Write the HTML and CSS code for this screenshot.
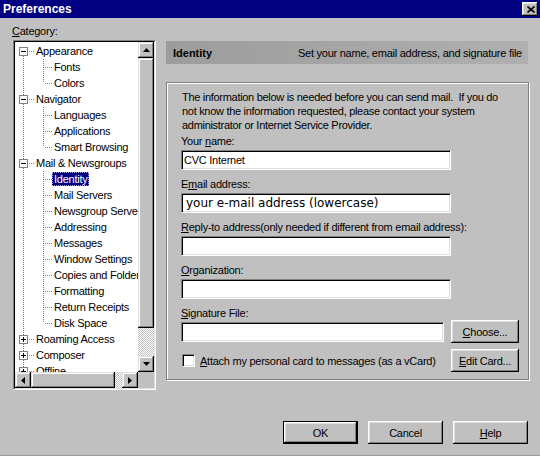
FILE: index.html
```html
<!DOCTYPE html>
<html>
<head>
<meta charset="utf-8">
<title>Preferences</title>
<link rel="stylesheet" href="styles.css">
</head>
<body>
<div class="window">
  <div class="titlebar">
    <span class="title">Preferences</span>
    <span class="close"><svg width="8" height="7" viewBox="0 0 8 7"><path d="M0.5 0.5L7.5 6.5M7.5 0.5L0.5 6.5" stroke="#000" stroke-width="1.6"/></svg></span>
  </div>

  <div class="main">
    <div class="left">
      <div class="cat-label"><u>C</u>ategory:</div>
      <div class="sunken">
        <div class="sunken-inner">
          <div class="tree-view">
            <ul class="tree">
              <li>
                <div class="row top"><span class="exp"><svg width="9" height="9"><rect x="0.5" y="0.5" width="8" height="8" fill="#fff" stroke="#808080"/><path d="M2 4.5h5" stroke="#000"/></svg></span><span class="hdots"></span><span class="lbl">Appearance</span></div>
                <ul class="children">
                  <li class="row child"><span class="hdots"></span><span class="lbl">Fonts</span></li>
                  <li class="row child"><span class="hdots"></span><span class="lbl">Colors</span></li>
                </ul>
              </li>
              <li>
                <div class="row top"><span class="exp"><svg width="9" height="9"><rect x="0.5" y="0.5" width="8" height="8" fill="#fff" stroke="#808080"/><path d="M2 4.5h5" stroke="#000"/></svg></span><span class="hdots"></span><span class="lbl">Navigator</span></div>
                <ul class="children">
                  <li class="row child"><span class="hdots"></span><span class="lbl">Languages</span></li>
                  <li class="row child"><span class="hdots"></span><span class="lbl">Applications</span></li>
                  <li class="row child"><span class="hdots"></span><span class="lbl">Smart Browsing</span></li>
                </ul>
              </li>
              <li>
                <div class="row top"><span class="exp"><svg width="9" height="9"><rect x="0.5" y="0.5" width="8" height="8" fill="#fff" stroke="#808080"/><path d="M2 4.5h5" stroke="#000"/></svg></span><span class="hdots"></span><span class="lbl">Mail &amp; Newsgroups</span></div>
                <ul class="children">
                  <li class="row child"><span class="hdots"></span><span class="lbl selected">Identity</span></li>
                  <li class="row child"><span class="hdots"></span><span class="lbl">Mail Servers</span></li>
                  <li class="row child"><span class="hdots"></span><span class="lbl">Newsgroup Servers</span></li>
                  <li class="row child"><span class="hdots"></span><span class="lbl">Addressing</span></li>
                  <li class="row child"><span class="hdots"></span><span class="lbl">Messages</span></li>
                  <li class="row child"><span class="hdots"></span><span class="lbl">Window Settings</span></li>
                  <li class="row child"><span class="hdots"></span><span class="lbl">Copies and Folders</span></li>
                  <li class="row child"><span class="hdots"></span><span class="lbl">Formatting</span></li>
                  <li class="row child"><span class="hdots"></span><span class="lbl">Return Receipts</span></li>
                  <li class="row child"><span class="hdots"></span><span class="lbl">Disk Space</span></li>
                </ul>
              </li>
              <li><div class="row top"><span class="exp"><svg width="9" height="9"><rect x="0.5" y="0.5" width="8" height="8" fill="#fff" stroke="#808080"/><path d="M2 4.5h5M4.5 2v5" stroke="#000"/></svg></span><span class="hdots"></span><span class="lbl">Roaming Access</span></div></li>
              <li><div class="row top"><span class="exp"><svg width="9" height="9"><rect x="0.5" y="0.5" width="8" height="8" fill="#fff" stroke="#808080"/><path d="M2 4.5h5M4.5 2v5" stroke="#000"/></svg></span><span class="hdots"></span><span class="lbl">Composer</span></div></li>
              <li><div class="row top"><span class="exp"><svg width="9" height="9"><rect x="0.5" y="0.5" width="8" height="8" fill="#fff" stroke="#808080"/><path d="M2 4.5h5M4.5 2v5" stroke="#000"/></svg></span><span class="hdots"></span><span class="lbl">Offline</span></div></li>
              <li><div class="row top"><span class="exp"><svg width="9" height="9"><rect x="0.5" y="0.5" width="8" height="8" fill="#fff" stroke="#808080"/><path d="M2 4.5h5M4.5 2v5" stroke="#000"/></svg></span><span class="hdots"></span><span class="lbl">Advanced</span></div></li>
            </ul>
          </div>
          <div class="vscroll">
            <span class="sbtn"><svg width="7" height="4" viewBox="0 0 7 4"><path d="M3.5 0L7 4H0z" fill="#000"/></svg></span>
            <span class="vthumb"></span>
            <span class="track"></span>
            <span class="sbtn"><svg width="7" height="4" viewBox="0 0 7 4"><path d="M0 0h7L3.5 4z" fill="#000"/></svg></span>
          </div>
          <div class="hscroll">
            <span class="sbtn"><svg width="4" height="7" viewBox="0 0 4 7"><path d="M4 0v7L0 3.5z" fill="#000"/></svg></span>
            <span class="hthumb"></span>
            <span class="track"></span>
            <span class="sbtn"><svg width="4" height="7" viewBox="0 0 4 7"><path d="M0 0v7L4 3.5z" fill="#000"/></svg></span>
          </div>
          <div class="corner"></div>
        </div>
      </div>
    </div>

    <div class="right">
      <div class="header">
        <span class="header-title">Identity</span>
        <span class="header-desc">Set your name, email address, and signature file</span>
      </div>
      <div class="group">
        <p class="intro">The information below is needed before you can send mail.&nbsp; If you do<br>not know the information requested, please contact your system<br>administrator or Internet Service Provider.</p>
        <div class="field">
          <div class="flabel">Your <u>n</u>ame:</div>
          <div class="input">CVC Internet</div>
        </div>
        <div class="field">
          <div class="flabel">E<u>m</u>ail address:</div>
          <div class="input mono">your e-mail address (lowercase)</div>
        </div>
        <div class="field">
          <div class="flabel"><u>R</u>eply-to address(only needed if different from email address):</div>
          <div class="input"></div>
        </div>
        <div class="field">
          <div class="flabel"><u>O</u>rganization:</div>
          <div class="input"></div>
        </div>
        <div class="field">
          <div class="flabel sig"><u>S</u>ignature File:</div>
          <div class="sig-row">
            <div class="input short"></div>
            <span class="btn small"><u>C</u>hoose...</span>
          </div>
        </div>
        <div class="check-row">
          <span class="checkbox"></span>
          <span class="check-label"><u>A</u>ttach my personal card to messages (as a vCard)</span>
          <span class="btn small"><u>E</u>dit Card...</span>
        </div>
      </div>
    </div>
  </div>

  <div class="footer">
    <span class="btn default">OK</span>
    <span class="btn">Cancel</span>
    <span class="btn"><u>H</u>elp</span>
  </div>
</div>
</body>
</html>
```

FILE: styles.css
```css
html, body {
  margin: 0;
  padding: 0;
}
body {
  background: #c0c0c0;
  font-family: "Liberation Sans", Arial, sans-serif;
  font-size: 11px;
  letter-spacing: -0.25px;
  color: #000;
}
.window {
  width: 540px;
  height: 456px;
  display: flex;
  flex-direction: column;
  background: #c0c0c0;
  box-sizing: border-box;
  border-bottom: 1px solid #9a9a9a;
}
.titlebar {
  height: 18px;
  background: #000080;
  display: flex;
  align-items: center;
  justify-content: space-between;
  padding: 0 2px 0 3px;
  flex: none;
}
.title {
  color: #fff;
  font-weight: bold;
  font-size: 12px;
  letter-spacing: 0;
  line-height: 18px;
}
.close {
  width: 16px;
  height: 14px;
  background: #c0c0c0;
  box-sizing: border-box;
  box-shadow: inset -1px -1px #000, inset 1px 1px #fff, inset -2px -2px #808080, inset 2px 2px #dfdfdf;
  display: flex;
  align-items: center;
  justify-content: center;
  padding-left: 1px;
}
.close svg { display: block; }

.main {
  display: flex;
  padding: 7px 0 0 12px;
  flex: none;
}
.left {
  width: 144px;
}
.cat-label {
  line-height: 13px;
  height: 13px;
}
.sunken {
  margin: 2px 0 0 1px;
  width: 143px;
  height: 350px;
  box-sizing: border-box;
  border: 1px solid;
  border-color: #808080 #fff #fff #808080;
}
.sunken-inner {
  box-sizing: border-box;
  width: 141px;
  height: 348px;
  border: 1px solid;
  border-color: #000 #dfdfdf #dfdfdf #000;
  display: grid;
  grid-template-columns: 123px 16px;
  grid-template-rows: 330px 16px;
}
.tree-view {
  background: #fff;
  overflow: hidden;
}
.tree, .children {
  list-style: none;
  margin: 0;
  padding: 0;
}
.tree {
  padding-top: 1px;
  background: repeating-linear-gradient(to bottom, #808080 0 1px, transparent 1px 2px) 8px 14px / 1px 100% no-repeat;
}
.children {
  background: repeating-linear-gradient(to bottom, #808080 0 1px, transparent 1px 2px) 28px 0 / 1px calc(100% - 8px) no-repeat;
}
.row {
  display: flex;
  align-items: center;
  height: 16px;
  white-space: nowrap;
}
.row.top {
  padding-left: 4px;
}
.exp {
  width: 9px;
  height: 9px;
  flex: none;
}
.exp svg { display: block; }
.hdots {
  height: 1px;
  flex: none;
  background: repeating-linear-gradient(to right, #808080 0 1px, transparent 1px 2px);
}
.row.top .hdots {
  width: 5px;
  margin-left: 1px;
}
.row.child {
  padding-left: 30px;
}
.row.child .hdots {
  width: 7px;
}
.lbl {
  display: inline-block;
  line-height: 14px;
  height: 14px;
  padding: 0 2px;
  box-sizing: border-box;
}
.lbl.selected {
  background: #000080;
  color: #fff;
  outline: 1px dotted #a8a8d8;
  outline-offset: -1px;
}

.vscroll {
  display: flex;
  flex-direction: column;
}
.hscroll {
  display: flex;
}
.sbtn {
  width: 16px;
  height: 16px;
  flex: none;
  box-sizing: border-box;
  background: #c0c0c0;
  box-shadow: inset -1px -1px #000, inset 1px 1px #dfdfdf, inset -2px -2px #808080, inset 2px 2px #fff;
  display: flex;
  align-items: center;
  justify-content: center;
}
.sbtn svg { display: block; }
.vthumb {
  height: 270px;
  flex: none;
  background: #c0c0c0;
  box-shadow: inset -1px -1px #000, inset 1px 1px #dfdfdf, inset -2px -2px #808080, inset 2px 2px #fff;
}
.hthumb {
  width: 84px;
  flex: none;
  background: #c0c0c0;
  box-shadow: inset -1px -1px #000, inset 1px 1px #dfdfdf, inset -2px -2px #808080, inset 2px 2px #fff;
}
.track {
  flex: 1;
  background: repeating-conic-gradient(#fff 0 25%, #c0c0c0 0 50%) 0 0 / 2px 2px;
}
.corner {
  background: #c0c0c0;
}

.right {
  margin-left: 10px;
  padding-top: 16px;
  width: 363px;
}
.header {
  height: 23px;
  margin-right: 1px;
  background: linear-gradient(to right, #9c9c9c, #b0b0b0);
  display: flex;
  align-items: center;
  justify-content: space-between;
  padding: 0 6px 0 7px;
}
.header-title {
  font-weight: bold;
  font-size: 11px;
  letter-spacing: 0;
}
.header-desc {
  font-size: 11px;
}
.group {
  margin-top: 18px;
  height: 298px;
  box-sizing: border-box;
  border: 1px solid #808080;
  box-shadow: inset 1px 1px #fff, 1px 1px #fff;
  padding: 7px 9px 0 14px;
}
.intro {
  margin: 0;
  padding-left: 1px;
  line-height: 14px;
  white-space: nowrap;
  letter-spacing: -0.3px;
}
.field {
  margin-top: 7px;
}
.intro + .field {
  margin-top: 2px;
}
.flabel {
  line-height: 14px;
  height: 14px;
  margin-bottom: 2px;
  white-space: nowrap;
}
.flabel.sig {
  margin-bottom: 0;
}
.input {
  width: 270px;
  height: 20px;
  box-sizing: border-box;
  background: #fff;
  border: 1px solid;
  border-color: #808080 #fff #fff #808080;
  box-shadow: inset 1px 1px #000, inset -1px -1px #dfdfdf;
  padding: 0 2px;
  line-height: 18px;
  white-space: nowrap;
}
.input.mono {
  font-family: "DejaVu Sans", Verdana, sans-serif;
  font-size: 12px;
  letter-spacing: 0;
  padding-left: 4px;
}
.input.short {
  width: 263px;
}
.sig-row {
  display: flex;
  align-items: center;
  justify-content: space-between;
}
.btn {
  width: 75px;
  height: 23px;
  box-sizing: border-box;
  background: #c0c0c0;
  box-shadow: inset -1px -1px #000, inset 1px 1px #fff, inset -2px -2px #808080, inset 2px 2px #dfdfdf;
  display: flex;
  align-items: center;
  justify-content: center;
  flex: none;
}
.btn.small {
  width: 68px;
}
.btn.default {
  border: 1px solid #000;
}
.check-row {
  display: flex;
  align-items: center;
  margin-top: 6px;
}
.checkbox {
  width: 13px;
  height: 13px;
  box-sizing: border-box;
  margin-left: 1px;
  background: #fff;
  border: 1px solid;
  border-color: #808080 #fff #fff #808080;
  box-shadow: inset 1px 1px #000, inset -1px -1px #dfdfdf;
  flex: none;
}
.check-label {
  margin-left: 5px;
  white-space: nowrap;
}
.check-row .btn {
  margin-left: auto;
}
.footer {
  display: flex;
  justify-content: flex-end;
  gap: 10px;
  padding-right: 12px;
  margin-top: 31px;
}
```
